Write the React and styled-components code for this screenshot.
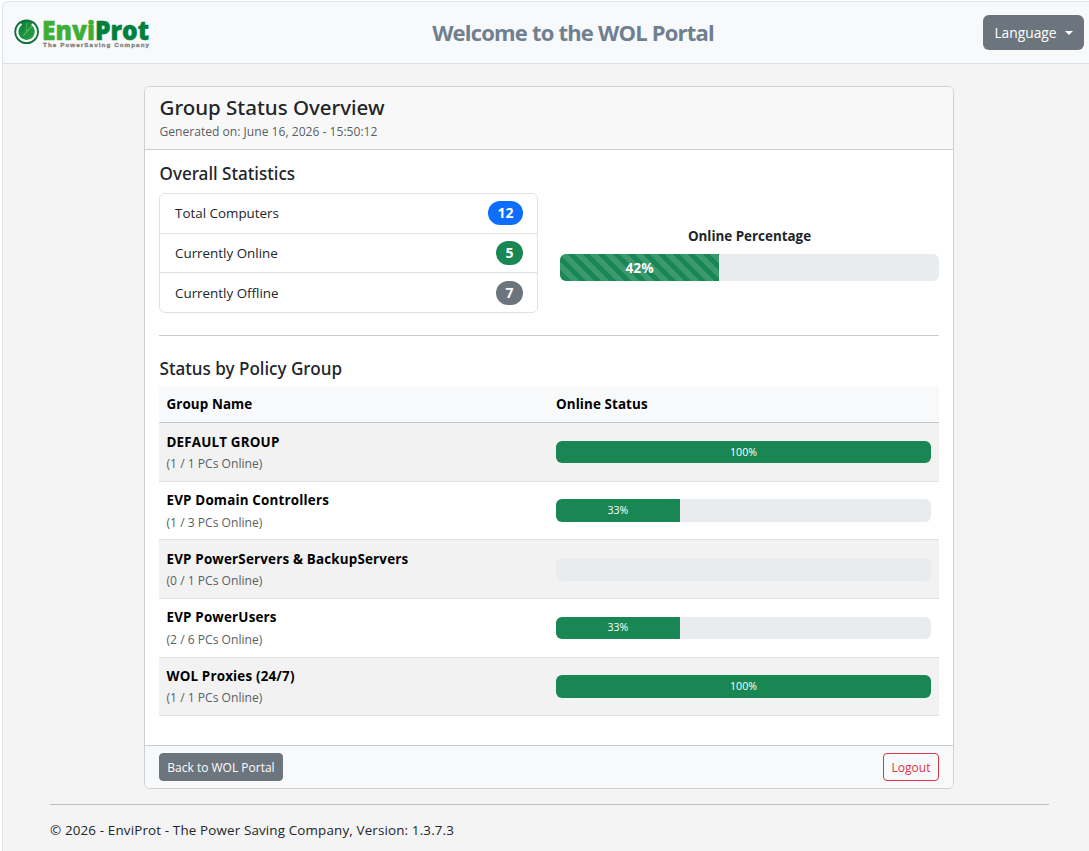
import React from "react"
import styled, { createGlobalStyle } from "styled-components"

const GlobalStyle = createGlobalStyle`
  * {
    box-sizing: border-box;
  }

  body {
    margin: 0;
    background: #fff;
    color: #212529;
    font-family: "Open Sans", "Noto Sans", sans-serif;
    font-size: 13.4px;
    line-height: 1.5;
  }
`

const Page = styled.div`
  height: 850px;
  margin: 1px 0 0 2px;
  overflow: hidden;
  background: #f4f4f4;
  border-left: 1px solid #dee2e6;
  border-top-left-radius: 6px;
`

const TopBar = styled.header`
  display: grid;
  grid-template-columns: 1fr auto 1fr;
  align-items: center;
  height: 63px;
  padding: 0 5px 0 11px;
  background: #f8f9fb;
  border-top: 1px solid #dee2e6;
  border-bottom: 1px solid #dee2e6;
  border-top-left-radius: 6px;
`

const Brand = styled.a`
  display: flex;
  height: 34px;
`

const Welcome = styled.h1`
  margin: -2px 0 0 48px;
  color: #708090;
  font-size: 22px;
  font-weight: 700;
  letter-spacing: -0.8px;
  line-height: 30px;
  white-space: nowrap;
`

const LanguageButton = styled.button`
  display: flex;
  align-items: center;
  justify-content: center;
  justify-self: end;
  gap: 8px;
  width: 101px;
  height: 35px;
  padding: 0;
  background: #6c757d;
  border: 0;
  border-radius: 6px;
  color: #fff;
  font-family: inherit;
  font-size: 13.8px;

  &::after {
    content: "";
    border: 4px solid transparent;
    border-top-color: #fff;
    border-bottom: 0;
  }
`

const Card = styled.main`
  display: flex;
  flex-direction: column;
  width: 810px;
  height: 703px;
  margin: 22px 0 0 141px;
  overflow: hidden;
  background: #fff;
  border: 1px solid #cfd0d1;
  border-radius: 6px;
`

const CardHeader = styled.div`
  height: 63px;
  padding: 5px 14px 0 14.5px;
  background: #f8f8f8;
  border-bottom: 1px solid #cccdce;
`

const CardTitle = styled.h2`
  margin: 0;
  font-family: "Noto Sans", sans-serif;
  font-size: 20.5px;
  font-weight: 500;
  line-height: 31px;
`

const Small = styled.div`
  color: #595f64;
  font-size: 12.1px;
  line-height: 17px;
`

const CardBody = styled.div`
  flex: 1;
  padding: 11px 14px 0;
`

const SectionTitle = styled.h3`
  margin: 0;
  padding-left: 0.5px;
  font-family: "Noto Sans", sans-serif;
  font-size: 17.1px;
  font-weight: 500;
  line-height: 26px;
`

const Stats = styled.div`
  display: grid;
  grid-template-columns: 379px 379px;
  gap: 22px;
`

const StatList = styled.ul`
  height: 120px;
  margin: 6px 0 0;
  padding: 0;
  list-style: none;
  border: 1px solid #dee2e6;
  border-radius: 6px;
`

const StatItem = styled.li`
  display: flex;
  align-items: center;
  justify-content: space-between;
  height: 38.9px;
  padding: 0 14px 0 15px;

  & + & {
    height: 39.4px;
    border-top: 1px solid #dee2e6;
  }

  &:last-child {
    height: 40.4px;
  }
`

const Badge = styled.span`
  min-width: 27px;
  padding: 0 9.4px;
  background: ${props => props.color};
  border-radius: 12px;
  color: #fff;
  font-size: 14px;
  font-weight: 700;
  line-height: 24px;
  text-align: center;
`

const Percentage = styled.div`
  padding-top: 65px;
`

const PercentageLabel = styled.div`
  margin-bottom: 8px;
  font-weight: 700;
  line-height: 20px;
  text-align: center;
`

const Progress = styled.div`
  display: flex;
  height: ${props => (props.$large ? "27px" : "22.55px")};
  overflow: hidden;
  background: #e9ecef;
  border-radius: 6px;
`

const ProgressBar = styled.div`
  display: flex;
  align-items: center;
  justify-content: center;
  padding-top: 1px;
  background-color: #198754;
  color: #fff;
  font-size: 10.6px;

  ${props =>
    props.$striped &&
    `
    background-image: linear-gradient(
      45deg,
      rgba(255, 255, 255, 0.15) 25%,
      transparent 25%,
      transparent 50%,
      rgba(255, 255, 255, 0.15) 50%,
      rgba(255, 255, 255, 0.15) 75%,
      transparent 75%,
      transparent
    );
    background-size: 15px 15px;
    font-size: 13.8px;
    font-weight: 700;
  `}
`

const Divider = styled.hr`
  height: 1px;
  margin: ${props => props.$margin};
  background: ${props => props.color};
  border: 0;
`

const Table = styled.div`
  margin-top: 4px;
  color: #000;
`

const TableHead = styled.div`
  display: grid;
  grid-template-columns: 1fr 383px;
  align-items: center;
  height: 37.25px;
  padding: 0 0 0 7.5px;
  background: #f8f9fb;
  border-bottom: 1px solid #c6c7c8;
  font-weight: 700;
  letter-spacing: 0.1px;
`

const TableRow = styled.div`
  display: grid;
  grid-template-columns: 1fr 375px;
  align-items: center;
  height: 58.6px;
  padding: 0 8px 0 7.5px;
  border-bottom: 1px solid #dee2e6;

  &:nth-child(even) {
    background: #f2f2f2;
  }
`

const GroupName = styled.div`
  margin: -0.6px 0 3.5px;
  font-weight: 700;
  letter-spacing: 0.18px;
  line-height: 20px;
`

const CardFooter = styled.div`
  display: flex;
  align-items: center;
  justify-content: space-between;
  height: 43px;
  padding: 0 14px;
  background: #f8f9fb;
  border-top: 1px solid #cccdce;
`

const Button = styled.button`
  width: ${props => props.width};
  height: 28px;
  padding: 0;
  background: ${props => (props.$outline ? "transparent" : "#6c757d")};
  border: 1px solid ${props => (props.$outline ? "#dc3545" : "#6c757d")};
  border-radius: 4px;
  color: ${props => (props.$outline ? "#dc3545" : "#fff")};
  font-family: inherit;
  font-size: 12px;
`

const Copyright = styled.footer`
  padding: 0 40px 0 47px;
  letter-spacing: 0.15px;
`

const LogoMark = styled.svg`
  overflow: visible;
`

const stats = [
  { label: "Total Computers", value: 12, color: "#0d6efd" },
  { label: "Currently Online", value: 5, color: "#198754" },
  { label: "Currently Offline", value: 7, color: "#6c757d" },
]

const groups = [
  { name: "DEFAULT GROUP", online: 1, total: 1, percent: 100 },
  { name: "EVP Domain Controllers", online: 1, total: 3, percent: 33 },
  { name: "EVP PowerServers & BackupServers", online: 0, total: 1, percent: 0 },
  { name: "EVP PowerUsers", online: 2, total: 6, percent: 33 },
  { name: "WOL Proxies (24/7)", online: 1, total: 1, percent: 100 },
]

const Logo = () => (
  <LogoMark width="138" height="34" viewBox="0 0 138 34">
    <defs>
      <linearGradient id="disc" x1="0" y1="0" x2="1" y2="1">
        <stop offset="0" stopColor="#0a7a3a" />
        <stop offset="1" stopColor="#2fa84a" />
      </linearGradient>
    </defs>
    <circle cx="12.6" cy="15.7" r="12.3" fill="#0b6b3f" />
    <circle cx="12.6" cy="15.7" r="10.8" fill="url(#disc)" />
    <path
      d="M7.4 8A9.3 9.3 0 1 0 17.8 8"
      fill="none"
      stroke="#fff"
      strokeWidth="2.1"
    />
    <path d="M12.6 16L18 10M12.6 16L9.5 19.5" stroke="#7fd05a" strokeWidth="1" />
    <path d="M12.6 16V7" stroke="#4db857" strokeWidth="0.8" />
    <text
      x="28"
      y="23.6"
      fontFamily="Open Sans"
      fontSize="27"
      fontWeight="800"
      strokeWidth="0.5"
      textLength="107"
      lengthAdjust="spacingAndGlyphs"
    >
      <tspan fill="#3fae35" stroke="#3fae35">Envi</tspan>
      <tspan fill="#00803d" stroke="#00803d">Prot</tspan>
    </text>
    <text
      x="29"
      y="31"
      fill="#808080"
      stroke="#808080"
      strokeWidth="0.3"
      fontFamily="Liberation Sans"
      fontSize="6.2"
      fontWeight="700"
      textLength="106"
    >
      The PowerSaving Company
    </text>
  </LogoMark>
)

const App = () => {
  return (
    <>
      <GlobalStyle />
      <Page>
        <TopBar>
          <Brand>
            <Logo />
          </Brand>
          <Welcome>Welcome to the WOL Portal</Welcome>
          <LanguageButton>Language</LanguageButton>
        </TopBar>
        <Card>
          <CardHeader>
            <CardTitle>Group Status Overview</CardTitle>
            <Small>Generated on: June 16, 2026 - 15:50:12</Small>
          </CardHeader>
          <CardBody>
            <Stats>
              <div>
                <SectionTitle>Overall Statistics</SectionTitle>
                <StatList>
                  {stats.map(stat => (
                    <StatItem key={stat.label}>
                      {stat.label}
                      <Badge color={stat.color}>{stat.value}</Badge>
                    </StatItem>
                  ))}
                </StatList>
              </div>
              <Percentage>
                <PercentageLabel>Online Percentage</PercentageLabel>
                <Progress $large>
                  <ProgressBar $striped style={{ width: "42%" }}>
                    42%
                  </ProgressBar>
                </Progress>
              </Percentage>
            </Stats>
            <Divider color="#c8c9ca" $margin="22px 0 20px" />
            <SectionTitle>Status by Policy Group</SectionTitle>
            <Table>
              <TableHead>
                <div>Group Name</div>
                <div>Online Status</div>
              </TableHead>
              {groups.map(group => (
                <TableRow key={group.name}>
                  <div>
                    <GroupName>{group.name}</GroupName>
                    <Small>
                      ({group.online} / {group.total} PCs Online)
                    </Small>
                  </div>
                  <Progress>
                    {group.percent > 0 && (
                      <ProgressBar style={{ width: `${group.percent}%` }}>
                        {group.percent}%
                      </ProgressBar>
                    )}
                  </Progress>
                </TableRow>
              ))}
            </Table>
          </CardBody>
          <CardFooter>
            <Button width="124px">Back to WOL Portal</Button>
            <Button width="56px" $outline>
              Logout
            </Button>
          </CardFooter>
        </Card>
        <Copyright>
          <Divider color="#c0c0c0" $margin="15px 0" />
          © 2026 - EnviProt - The Power Saving Company, Version: 1.3.7.3
        </Copyright>
      </Page>
    </>
  )
}

export default App
